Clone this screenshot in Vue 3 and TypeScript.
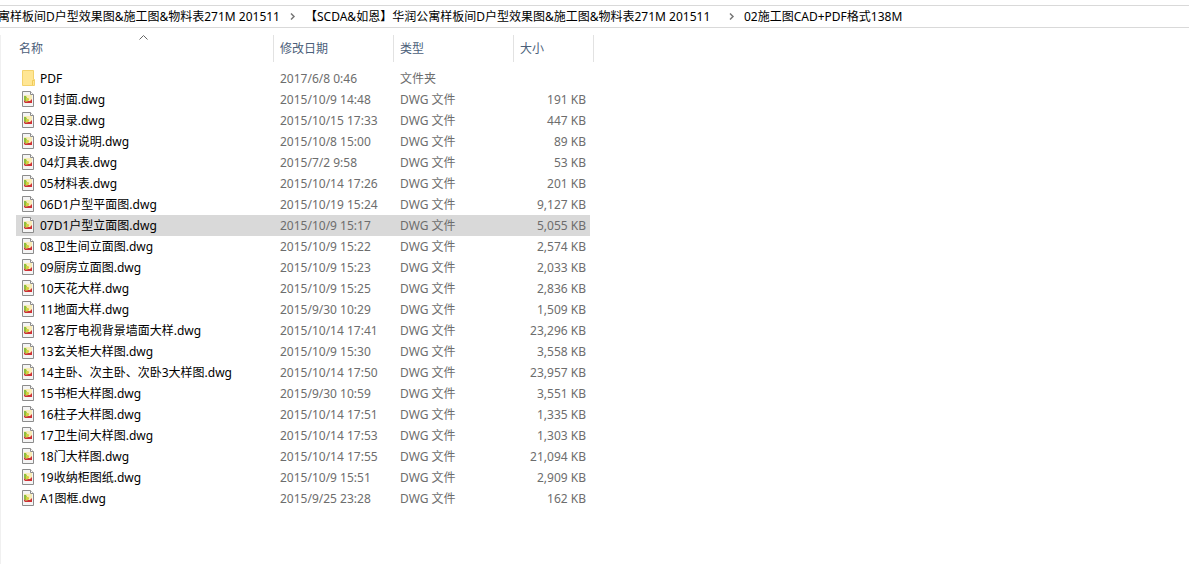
<script setup lang="ts">
import { ref } from 'vue'

interface Entry {
  name: string
  date: string
  size: string
}

const crumbs: string[] = [
  '寓样板间D户型效果图&施工图&物料表271M 201511',
  '【SCDA&如恩】华润公寓样板间D户型效果图&施工图&物料表271M 201511',
  '02施工图CAD+PDF格式138M',
]

const entries: Entry[] = [
  { name: 'PDF', date: '2017/6/8 0:46', size: '' },
  { name: '01封面.dwg', date: '2015/10/9 14:48', size: '191 KB' },
  { name: '02目录.dwg', date: '2015/10/15 17:33', size: '447 KB' },
  { name: '03设计说明.dwg', date: '2015/10/8 15:00', size: '89 KB' },
  { name: '04灯具表.dwg', date: '2015/7/2 9:58', size: '53 KB' },
  { name: '05材料表.dwg', date: '2015/10/14 17:26', size: '201 KB' },
  { name: '06D1户型平面图.dwg', date: '2015/10/19 15:24', size: '9,127 KB' },
  { name: '07D1户型立面图.dwg', date: '2015/10/9 15:17', size: '5,055 KB' },
  { name: '08卫生间立面图.dwg', date: '2015/10/9 15:22', size: '2,574 KB' },
  { name: '09厨房立面图.dwg', date: '2015/10/9 15:23', size: '2,033 KB' },
  { name: '10天花大样.dwg', date: '2015/10/9 15:25', size: '2,836 KB' },
  { name: '11地面大样.dwg', date: '2015/9/30 10:29', size: '1,509 KB' },
  { name: '12客厅电视背景墙面大样.dwg', date: '2015/10/14 17:41', size: '23,296 KB' },
  { name: '13玄关柜大样图.dwg', date: '2015/10/9 15:30', size: '3,558 KB' },
  { name: '14主卧、次主卧、次卧3大样图.dwg', date: '2015/10/14 17:50', size: '23,957 KB' },
  { name: '15书柜大样图.dwg', date: '2015/9/30 10:59', size: '3,551 KB' },
  { name: '16柱子大样图.dwg', date: '2015/10/14 17:51', size: '1,335 KB' },
  { name: '17卫生间大样图.dwg', date: '2015/10/14 17:53', size: '1,303 KB' },
  { name: '18门大样图.dwg', date: '2015/10/14 17:55', size: '21,094 KB' },
  { name: '19收纳柜图纸.dwg', date: '2015/10/9 15:51', size: '2,909 KB' },
  { name: 'A1图框.dwg', date: '2015/9/25 23:28', size: '162 KB' },
]

const selected = ref<string>('07D1户型立面图.dwg')
const isFolder = (e: Entry): boolean => e.size === ''
</script>

<template>
  <div class="explorer">
    <nav class="address">
      <template v-for="(crumb, i) in crumbs" :key="i">
        <svg v-if="i > 0" class="chevron" width="6" height="7" viewBox="0 0 6 7">
          <path d="M1 0.5 4 3.5 1 6.5" fill="none" stroke="#777" stroke-width="1.5" />
        </svg>
        <button type="button" class="crumb" :class="{ parent: i === 0, current: i === 1 }">{{ crumb }}</button>
      </template>
    </nav>

    <main class="listing">
      <table>
        <colgroup>
          <col class="col-name" />
          <col class="col-date" />
          <col class="col-type" />
          <col class="col-size" />
        </colgroup>
        <thead>
          <tr>
            <th class="name-head" aria-sort="ascending">
              <svg class="sort" width="9" height="5" viewBox="0 0 9 5">
                <path d="M0.5 4.5 4.5 0.5 8.5 4.5" fill="none" stroke="#666" />
              </svg>
              <button type="button">名称</button>
            </th>
            <th><button type="button">修改日期</button></th>
            <th><button type="button">类型</button></th>
            <th><button type="button">大小</button></th>
          </tr>
        </thead>
        <tbody>
          <tr
            v-for="e in entries"
            :key="e.name"
            :class="{ selected: e.name === selected }"
            @click="selected = e.name"
          >
            <td class="name">
              <div class="label">
                <svg v-if="isFolder(e)" class="icon" width="13" height="16" viewBox="0 0 13 16">
                  <path d="M0.5 0.5H11.5V9.5H12.5V15.5H0.5Z" fill="#ffe694" stroke="#f3d26c" />
                  <path d="M10.5 15V10.5H12" fill="none" stroke="#f0cb58" />
                </svg>
                <svg v-else class="icon" width="13" height="16" viewBox="0 0 13 16">
                  <path d="M0.5 0.5H8.5L11.5 3.5V15.5H0.5Z" fill="#f4f4f4" stroke="#8c8c8c" />
                  <path d="M8.5 0.5V3.5H11.5" fill="#fff" stroke="#8c8c8c" />
                  <path d="M2 4H10V11H2Z" fill="#f8ecb6" />
                  <path d="M2 5H4L5 7 7 8 6 10 4 11 2 9Z" fill="#8dbe3e" />
                  <path d="M4 7H6L7 8 6 10H4Z" fill="#d8d13c" />
                  <path d="M2 9 4 11 6 10 8 10 10 8V12H3L2 11Z" fill="#cf3236" />
                </svg>
                <span>{{ e.name }}</span>
              </div>
            </td>
            <td>{{ e.date }}</td>
            <td>{{ isFolder(e) ? '文件夹' : 'DWG 文件' }}</td>
            <td class="size">{{ e.size }}</td>
          </tr>
        </tbody>
      </table>
    </main>
  </div>
</template>

<style>
body {
  background: #fff;
}
</style>

<style scoped>
.explorer {
  min-height: 100vh;
  display: flex;
  flex-direction: column;
  box-sizing: border-box;
  padding-top: 5px;
  font-family: "Noto Sans", "Noto Sans CJK SC", sans-serif;
  font-size: 12px;
  line-height: 20px;
  color: #000;
}

button {
  margin: 0;
  padding: 0;
  border: 0;
  background: none;
  font: inherit;
  color: inherit;
  text-align: left;
  white-space: nowrap;
}

.address {
  display: flex;
  align-items: center;
  height: 21px;
  border-top: 1px solid #d9d9d9;
  border-bottom: 1px solid #d9d9d9;
}

.crumb {
  flex: none;
}

.parent {
  display: flex;
  justify-content: flex-end;
  width: 280px;
}

.current {
  min-width: 414px;
}

.chevron {
  flex: none;
  margin: 0 9px 0 10px;
}

.listing {
  flex: 1;
  margin-top: 7px;
  padding-left: 15px;
  border-left: 1px solid #f0f0f0;
}

table {
  width: 578px;
  table-layout: fixed;
  border-collapse: separate;
  border-spacing: 0;
}

.col-name {
  width: 258px;
}

.col-date,
.col-type {
  width: 120px;
}

.col-size {
  width: 80px;
}

th {
  height: 27px;
  padding: 0 0 0 6px;
  border-right: 1px solid #e2e2e2;
  font-weight: 400;
  text-align: left;
  color: #4c607a;
}

.name-head {
  position: relative;
  padding-left: 3px;
}

.sort {
  position: absolute;
  top: 0;
  left: 123px;
}

tbody::before {
  content: "";
  display: block;
  height: 6px;
}

td {
  height: 21px;
  padding: 0 0 0 6px;
  line-height: 21px;
  white-space: nowrap;
  color: #6d6d6d;
}

.name {
  color: #000;
}

.label {
  display: flex;
  align-items: flex-start;
  gap: 5px;
}

.icon {
  flex: none;
  margin-top: 2px;
}

.size {
  padding-right: 8px;
  text-align: right;
}

.selected td {
  background: #d9d9d9;
}

.selected .size {
  background: linear-gradient(#d9d9d9, #d9d9d9) no-repeat left / calc(100% - 4px) 100%;
}
</style>
